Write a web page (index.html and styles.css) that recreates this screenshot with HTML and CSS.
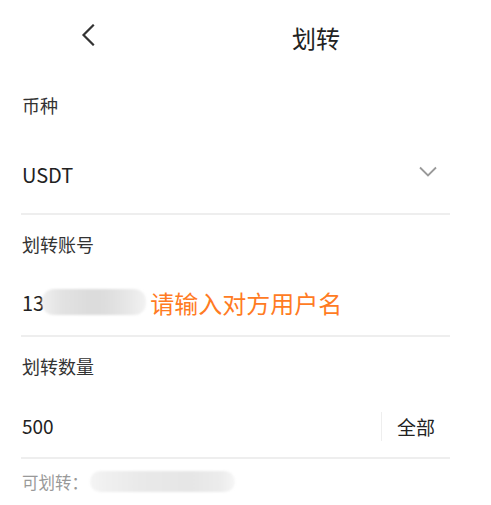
FILE: index.html
```html
<!DOCTYPE html>
<html lang="zh-CN">
<head>
<meta charset="utf-8">
<title>划转</title>
<link rel="stylesheet" href="styles.css">
</head>
<body>
<div class="page">
  <header class="topbar">
    <div class="back">
      <svg width="14" height="22" viewBox="0 0 14 22"><path d="M12 1.5 L2.5 11 L12 20.5" fill="none" stroke="#333" stroke-width="2.2" stroke-linecap="square"/></svg>
    </div>
    <h1 class="title">划转</h1>
  </header>

  <section class="field">
    <div class="label">币种</div>
    <div class="value-row value-row--select">
      <span class="value">USDT</span>
      <svg class="caret" width="20" height="12" viewBox="0 0 20 12"><path d="M2 1.5 L10 9.5 L18 1.5" fill="none" stroke="#999" stroke-width="1.8"/></svg>
    </div>
  </section>

  <section class="field">
    <div class="label">划转账号</div>
    <div class="value-row">
      <span class="value">13</span>
      <span class="redact redact--account"></span>
      <span class="placeholder">请输入对方用户名</span>
    </div>
  </section>

  <section class="field">
    <div class="label">划转数量</div>
    <div class="value-row">
      <span class="value value--amount">500</span>
      <span class="all">全部</span>
    </div>
  </section>

  <div class="hint">
    <span>可划转：</span>
    <span class="redact redact--balance"></span>
  </div>
</div>
</body>
</html>
```

FILE: styles.css
```css
* { box-sizing: border-box; }
html, body { margin: 0; padding: 0; background: #fff; }
body {
  font-family: "Noto Sans CJK SC", "Noto Sans", sans-serif;
  color: #333;
}
.page { width: 491px; }

.topbar {
  height: 76px;
  display: grid;
  grid-template-columns: 141px 1fr;
  align-items: center;
}
.back {
  padding-left: 81px;
  display: flex;
  align-items: center;
  margin-top: -6px;
}
.title {
  margin: 0;
  font-size: 24px;
  font-weight: normal;
  text-align: center;
  color: #222;
  line-height: 30px;
}

.field {
  margin-left: 21px;
  width: 429px;
  border-bottom: 2px solid #eeeeee;
}
.label {
  height: 54px;
  padding-top: 14px;
  padding-left: 1px;
  font-size: 18px;
  line-height: 30px;
  color: #333;
}
.value-row {
  height: 66px;
  display: flex;
  align-items: center;
  padding-left: 1px;
}
.value-row--select {
  height: 78px;
  margin-top: 5px;
  justify-content: space-between;
  padding-right: 12px;
}
.value {
  font-size: 20px;
  color: #222;
}
.value--amount {
  flex: 1;
  font-size: 19px;
  margin-top: 2px;
}
.caret { display: block; margin-top: -4px; }

.redact {
  display: inline-block;
  border-radius: 12px;
  filter: blur(1px);
}
.redact--account {
  width: 104px;
  height: 26px;
  margin-left: -2px;
  background: linear-gradient(90deg, #efefef 0%, #e2e2e2 20%, #dcdcdc 45%, #dddddd 60%, #e6e6e6 80%, #f2f2f2 100%);
}
.placeholder {
  margin-left: 4px;
  font-size: 24px;
  color: #ff7b23;
}
.all {
  font-size: 19px;
  color: #222;
  height: 29px;
  line-height: 29px;
  padding-left: 15px;
  padding-right: 15px;
  border-left: 1px solid #eeeeee;
  margin-top: 4px;
  box-sizing: content-box;
}

.hint {
  margin-left: 22px;
  padding-top: 5px;
  height: 40px;
  display: flex;
  align-items: center;
  font-size: 16.5px;
  line-height: 30px;
  color: #999;
}
.redact--balance {
  width: 145px;
  height: 21px;
  margin-left: 2px;
  background: linear-gradient(90deg, #f4f4f4 0%, #f0f0f0 10%, #e9e9e9 35%, #e6e6e6 70%, #ececec 90%, #f6f6f6 100%);
}
```
